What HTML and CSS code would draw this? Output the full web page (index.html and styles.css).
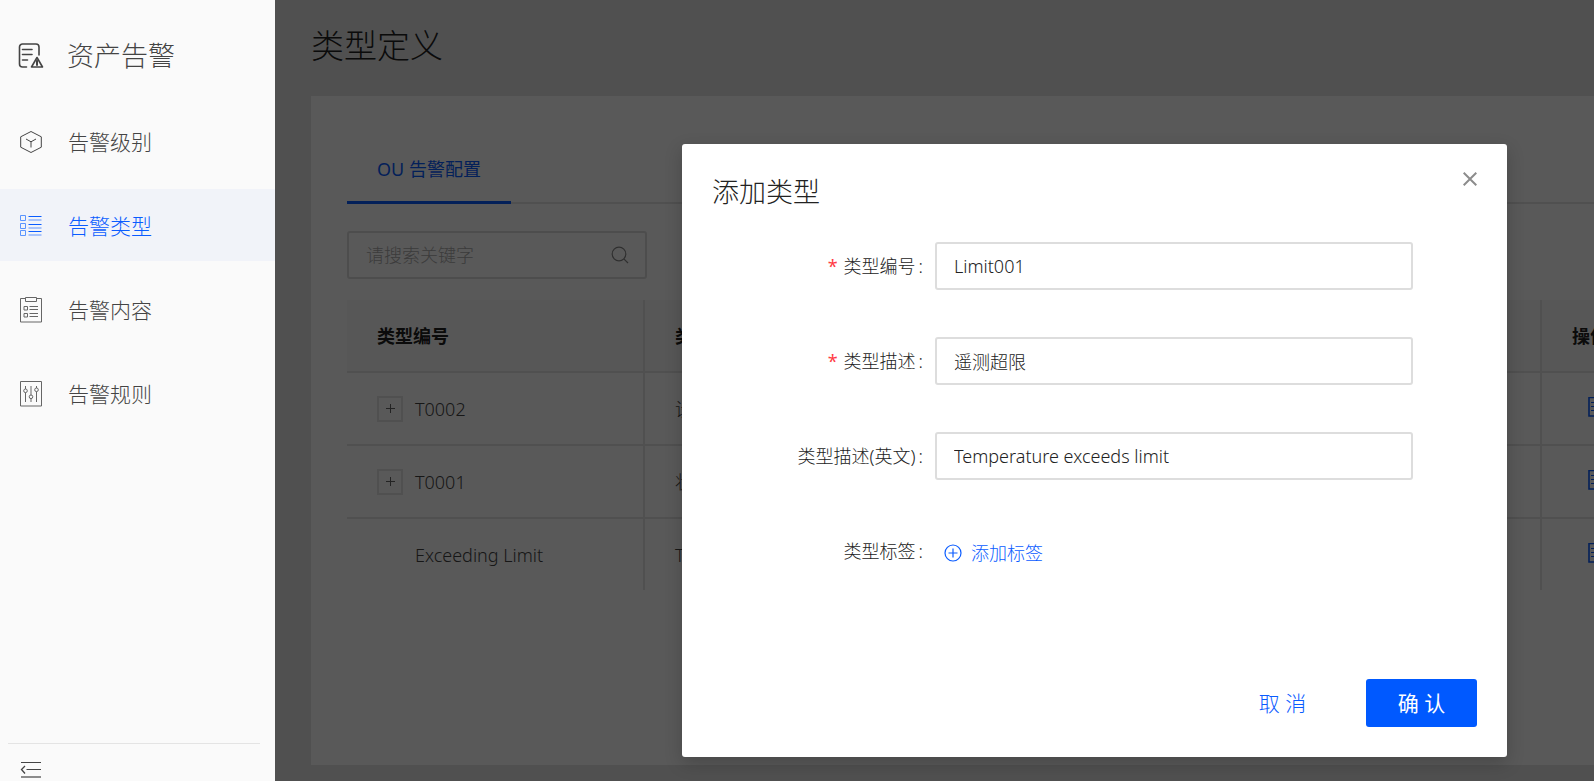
FILE: index.html
```html
<!DOCTYPE html>
<html lang="zh-CN">
<head>
<meta charset="utf-8">
<title>类型定义</title>
<link rel="stylesheet" href="styles.css">
</head>
<body>
<div class="app">
  <aside class="sidebar">
    <div class="brand">
      <svg class="brand-icon" width="26" height="26" viewBox="0 0 26 26" fill="none" stroke="#444" stroke-width="1.6" stroke-linecap="round" stroke-linejoin="round"><path d="M8.500 24H4.500a3 3 0 0 1-3-3v-17A3 3 0 0 1 4.500 1h13.500A3 3 0 0 1 21 4V12M4.500 6.500H14M4.500 11.500H14M4.500 17H9.500M19 14.500l5.500 9.500h-11z"/><path d="M19 17.500v4.500" stroke-width="2"/></svg>
      <span>资产告警</span>
    </div>
    <nav class="menu">
      <a class="menu-item" href="#level">
        <svg width="22" height="24" viewBox="0 0 22 24" fill="none" stroke="#444" stroke-width="1"><path d="M11 1.500l10.300 5.300v10.400L11 22.500.700 17.200V6.800zM6 9l5 2.800L16 9M11 11.800V17.500"/></svg>
        <span>告警级别</span>
      </a>
      <a class="menu-item active" href="#type" aria-current="page">
        <svg width="22" height="24" viewBox="0 0 22 24" fill="none" stroke="#5b95ff" stroke-width="1"><path d="M.500 1.500h5v5h-5zM.500 9.500h5v5h-5zM.500 16.500h5v5h-5z"/><path d="M8.500 2.500H21.500M8.500 10.500H21.500M8.500 17.500H21.500" stroke="#0a5cff"/><path d="M8.500 6H21.500M8.500 14H21.500M8.500 21H21.500" stroke="#a9c4fb" stroke-width="2"/></svg>
        <span>告警类型</span>
      </a>
      <a class="menu-item" href="#content">
        <svg width="22" height="26" viewBox="0 0 22 26" fill="none" stroke="#666" stroke-width="1"><path d="M5 1.500H.500v23.500h21V1.500H17M5.500.500h11v4h-11zM4 9.500h3.500v3.500H4zM4 16.500h3.500v3.500H4zM9.500 9.500H18M9.500 12.500H18M9.500 16.500H18M9.500 19.500H18"/></svg>
        <span>告警内容</span>
      </a>
      <a class="menu-item" href="#rule">
        <svg width="22" height="26" viewBox="0 0 22 26" fill="none" stroke="#666" stroke-width="1"><path d="M.500.500h21v24.500h-21zM5.500 5v3M5.500 11.500V21M11 5v9M11 17.500V21M16.500 5v2M16.500 10.500V21"/><circle cx="5.500" cy="9.800" r="1.800"/><circle cx="11" cy="15.800" r="1.800"/><circle cx="16.500" cy="8.800" r="1.800"/></svg>
        <span>告警规则</span>
      </a>
    </nav>
    <div class="collapse">
      <button class="icon-button" type="button" aria-label="收起菜单">
        <svg width="22" height="20" viewBox="0 0 22 20" fill="none" stroke="#444" stroke-width="1"><path d="M1 2.500H21M6.500 9.500H21"/><path d="M5 6L1.500 9.500 5 13.500" stroke-width="1.300"/><path d="M1 17H21" stroke="#8c8c8c" stroke-width="2"/></svg>
      </button>
    </div>
  </aside>

  <main class="main">
    <h1 class="page-title">类型定义</h1>
    <section class="card">
      <div class="tabs" role="tablist">
        <button class="tab" type="button" role="tab" aria-selected="true">OU 告警配置</button>
      </div>
      <div class="search">
        <input type="text" placeholder="请搜索关键字" aria-label="请搜索关键字">
        <svg width="18" height="18" viewBox="0 0 18 18" fill="none" stroke="#888" stroke-width="1.200"><circle cx="8" cy="8" r="6.800"/><path d="M12.800 12.800L17 17"/></svg>
      </div>
      <table class="table">
        <colgroup><col class="col-code"><col><col class="col-action"></colgroup>
        <thead>
          <tr><th>类型编号</th><th>类型描述</th><th>操作</th></tr>
        </thead>
        <tbody>
          <tr>
            <td><div class="code"><button class="expand" type="button" aria-label="展开"></button><span>T0002</span></div></td>
            <td>设备</td>
            <td><button class="icon-button" type="button" aria-label="编辑"><svg width="18" height="20" viewBox="0 0 18 20" fill="none" stroke="#0a5cff"><path d="M1 .500V19H17V.500z" stroke-width="1.600"/><path d="M3 5.500H15M3 9.500H15M3 13.500H15"/></svg></button></td>
          </tr>
          <tr>
            <td><div class="code"><button class="expand" type="button" aria-label="展开"></button><span>T0001</span></div></td>
            <td>状态</td>
            <td><button class="icon-button" type="button" aria-label="编辑"><svg width="18" height="20" viewBox="0 0 18 20" fill="none" stroke="#0a5cff"><path d="M1 .500V19H17V.500z" stroke-width="1.600"/><path d="M3 5.500H15M3 9.500H15M3 13.500H15"/></svg></button></td>
          </tr>
          <tr>
            <td><div class="code leaf"><span>Exceeding Limit</span></div></td>
            <td>T</td>
            <td><button class="icon-button" type="button" aria-label="编辑"><svg width="18" height="20" viewBox="0 0 18 20" fill="none" stroke="#0a5cff"><path d="M1 .500V19H17V.500z" stroke-width="1.600"/><path d="M3 5.500H15M3 9.500H15M3 13.500H15"/></svg></button></td>
          </tr>
        </tbody>
      </table>
    </section>

    <div class="mask">
      <div class="modal" role="dialog" aria-modal="true" aria-labelledby="modal-title">
        <header class="modal-header">
          <h2 id="modal-title">添加类型</h2>
          <button class="icon-button" type="button" aria-label="关闭">
            <svg width="14" height="14" viewBox="0 0 14 14" fill="none" stroke="#8c8c8c" stroke-width="2"><path d="M.700.700l12.600 12.600M13.300.700L.700 13.300"/></svg>
          </button>
        </header>
        <form class="form">
          <div class="field">
            <label class="required" for="code">类型编号</label>
            <input id="code" type="text" value="Limit001">
          </div>
          <div class="field">
            <label class="required" for="desc">类型描述</label>
            <input id="desc" type="text" value="遥测超限">
          </div>
          <div class="field">
            <label for="desc-en">类型描述(英文)</label>
            <input id="desc-en" type="text" value="Temperature exceeds limit">
          </div>
          <div class="field">
            <label for="add-tag">类型标签</label>
            <button class="add-tag" id="add-tag" type="button">
              <svg width="18" height="18" viewBox="0 0 18 18" fill="none" stroke="#0a5cff" stroke-width="1.200"><circle cx="9" cy="9" r="8"/><path d="M9 4.500v9M4.500 9h9"/></svg>
              <span>添加标签</span>
            </button>
          </div>
        </form>
        <footer class="modal-footer">
          <button class="btn" type="button">取 消</button>
          <button class="btn primary" type="button">确 认</button>
        </footer>
      </div>
    </div>
  </main>
</div>
</body>
</html>
```
FILE: styles.css
```css
* {
  box-sizing: border-box;
}

body {
  margin: 0;
  color: #444;
  font-family: "Noto Sans", "Noto Sans CJK SC", sans-serif;
  font-size: 18px;
  font-weight: 300;
  line-height: 24px;
}

button,
input {
  margin: 0;
  font: inherit;
  color: inherit;
}

button {
  padding: 0;
  border: 0;
  background: none;
  cursor: pointer;
}

svg {
  display: block;
  flex: none;
}

.icon-button {
  display: block;
}

.app {
  display: grid;
  grid-template-columns: 275px minmax(0, 1fr);
  height: 100vh;
  overflow: hidden;
}

/* Sidebar */
.sidebar {
  display: flex;
  flex-direction: column;
  background: #fafafa;
}

.brand {
  display: flex;
  align-items: center;
  gap: 23px;
  height: 105px;
  padding: 6px 18px 0;
  font-size: 27px;
  line-height: 36px;
}

.menu {
  display: flex;
  flex-direction: column;
  gap: 12px;
}

.menu-item {
  display: flex;
  align-items: center;
  gap: 26px;
  height: 72px;
  padding: 2px 20px 0;
  color: #444;
  font-size: 21px;
  line-height: 30px;
  text-decoration: none;
}

.menu-item.active {
  background: #f1f3f9;
  color: #0a5cff;
}

.collapse {
  margin: auto 15px 0 8px;
  padding: 16px 12px 1px;
  border-top: 1px solid #e4e4e4;
}

/* Page */
.main {
  position: relative;
  display: flex;
  flex-direction: column;
  padding: 0 0 16px 36px;
  overflow: hidden;
  background: #e6e6e6;
}

.page-title {
  margin: 0;
  padding: 22px 0 26px;
  color: #222;
  font-size: 33px;
  font-weight: 300;
  line-height: 48px;
}

.card {
  flex: 1;
  padding: 36px 0 0 36px;
  background: #fff;
}

.tabs {
  display: flex;
  height: 72px;
  margin-bottom: 27px;
  box-shadow: inset 0 -2px #e6e6e6;
}

.tab {
  padding: 4px 30px 0;
  border-bottom: 3px solid #0a5cff;
  color: #0a5cff;
  font-weight: 400;
}

.search {
  display: flex;
  align-items: center;
  width: 300px;
  height: 48px;
  margin-bottom: 21px;
  padding: 0 16px 0 17px;
  border: 2px solid #ddd;
  border-radius: 3px;
}

.search input {
  flex: 1;
  min-width: 0;
  padding: 0;
  border: 0;
  background: none;
}

.search input::placeholder {
  color: #aaa;
}

.table {
  width: 100%;
  border-collapse: separate;
  border-spacing: 0;
  table-layout: fixed;
  text-align: left;
}

.col-code {
  width: 298px;
}

.col-action {
  width: 52px;
}

.table th,
.table td {
  height: 73px;
  padding: 0 30px;
  border-right: 2px solid #e6e6e6;
  border-bottom: 2px solid #e6e6e6;
  overflow: hidden;
  white-space: nowrap;
}

.table th {
  background: #fafafa;
  color: #222;
  font-weight: 700;
}

.table th:last-child,
.table td:last-child {
  padding-right: 0;
  border-right: 0;
}

.table td:last-child {
  padding-bottom: 4px;
  padding-left: 46px;
}

.table tr:last-child td {
  height: 71px;
  border-bottom: 0;
}

.code {
  display: flex;
  align-items: center;
  gap: 12px;
}

.code.leaf {
  padding-left: 38px;
}

.expand {
  width: 26px;
  height: 26px;
  border: 2px solid #e6e6e6;
  background:
    linear-gradient(#666, #666) center / 9px 1px no-repeat,
    linear-gradient(#666, #666) center / 1px 9px no-repeat;
}

/* Dialog */
.mask {
  position: absolute;
  inset: 0;
  display: flex;
  align-items: flex-start;
  justify-content: flex-end;
  padding: 144px 87px 0 0;
  background: rgba(0, 0, 0, .65);
}

.modal {
  width: 825px;
  padding: 28px 30px 30px;
  border-radius: 3px;
  background: #fff;
  box-shadow: 0 6px 18px rgba(0, 0, 0, .2);
  color: #222;
}

.modal-header {
  display: flex;
  justify-content: space-between;
  align-items: flex-start;
}

.modal-header h2 {
  margin: 0;
  font-size: 27px;
  font-weight: 300;
  line-height: 40px;
}

.form {
  display: grid;
  gap: 47px;
  padding: 30px 64px 104px 0;
}

.field {
  display: grid;
  grid-template-columns: 211px minmax(0, 1fr);
  align-items: center;
  gap: 12px;
  height: 48px;
}

.field label {
  text-align: right;
}

.field label::after {
  content: ":";
  margin-left: 3px;
}

.required::before {
  content: "*";
  margin-right: 6px;
  color: #ff3b45;
  font-weight: 400;
}

.field input {
  width: 100%;
  height: 48px;
  padding: 0 17px;
  border: 2px solid #ddd;
  border-radius: 3px;
  background: #fff;
}

.add-tag {
  display: flex;
  align-items: center;
  justify-self: start;
  gap: 9px;
  padding: 4px 0 0 9px;
  color: #0a5cff;
}

.modal-footer {
  display: flex;
  justify-content: flex-end;
  gap: 28px;
}

.btn {
  width: 111px;
  height: 48px;
  border-radius: 3px;
  color: #0a5cff;
  font-size: 21px;
}

.btn.primary {
  background: #0059ff;
  color: #fff;
  font-weight: 400;
}
```
